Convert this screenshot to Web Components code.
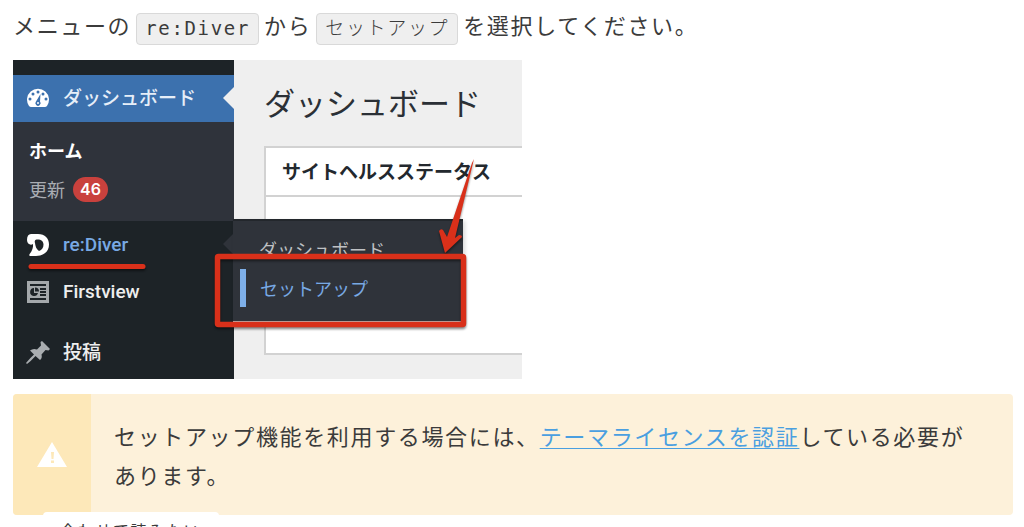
<!DOCTYPE html>
<html lang="ja">
<head>
<meta charset="utf-8">
<meta name="viewport" content="width=device-width, initial-scale=1">
<title>re:Diver セットアップ</title>
<style>
  body {
    margin: 0;
    background: #fff;
    color: #3b3b3b;
    font: 22px/39px "Noto Sans CJK JP", sans-serif;
    letter-spacing: 0.075em;
  }
</style>
</head>
<body>
<guide-page></guide-page>

<template id="t-page">
  <style>
    :host { display: block; padding: 5px 11px 0 13px; }
    p { margin: 0; }
    dashboard-shot { margin-top: 15px; }
    alert-note { margin-top: 15px; }
  </style>
  <p>メニューの<code-chip>re:Diver</code-chip>から<code-chip>セットアップ</code-chip>を選択してください。</p>
  <dashboard-shot></dashboard-shot>
  <alert-note>セットアップ機能を利用する場合には、<text-link href="#license">テーマライセンスを認証</text-link>している必要があります。</alert-note>
  <related-card>合わせて読みたい</related-card>
</template>

<template id="t-chip">
  <style>
    :host { display: inline-block; margin: 0 5px; vertical-align: top; }
    code {
      display: block; box-sizing: border-box; height: 32px; margin-top: 8px; padding: 0 8px;
      border: 1px solid #d9d9d9; border-radius: 4px; background: #efefef;
      font: 300 19px/28px "DejaVu Sans Mono", "Noto Sans CJK JP", monospace;
    }
  </style>
  <code><slot></slot></code>
</template>

<template id="t-link"><style>
    :host { display: inline; }
    a { color: #4a9fe0; text-decoration: underline; text-decoration-thickness: 1px; text-underline-offset: 3px; }
  </style><a><slot></slot></a></template>

<template id="t-alert">
  <style>
    :host { display: grid; grid-template-columns: 78px 1fr; border-radius: 4px; overflow: hidden; background: #fdf1da; }
    .mark { display: grid; place-items: center; background: #fde8b9; }
    .text { padding: 22px 36px 21px 23px; }
    svg { display: block; }
  </style>
  <div class="mark">
    <svg width="30" height="25" viewBox="0 0 30 25" aria-hidden="true">
      <path d="M15 0 30 25H0Z" fill="#fff"/>
      <path d="M14 10h3l-.5 7h-2zM14 18.500h3v2.500h-3z" fill="#fde8b9"/>
    </svg>
  </div>
  <div class="text"><slot></slot></div>
</template>

<template id="t-related">
  <style>
    :host { display: block; position: relative; margin-top: -3px; padding-left: 30px; }
    span { display: inline-block; padding: 6px 18px 0 17px; border-radius: 4px; background: #fff; font-size: 16px; line-height: 24px; vertical-align: top; }
  </style>
  <span><slot></slot></span>
</template>

<template id="t-menu-item">
  <style>
    :host { display: block; position: relative; }
    a {
      display: flex; align-items: center; gap: 12px; height: 47px; padding-left: 12px;
      color: inherit; text-decoration: none;
      font: 500 19px/24px Roboto, "Noto Sans CJK JP", sans-serif;
    }
    ::slotted(svg) { display: block; flex: none; }
    :host([active]) { background: #3c71ae; color: #e6eef8; }
    :host([open]) { color: #78a9e4; }
    :host([active])::after, :host([open])::after {
      content: ""; position: absolute; right: 0; top: 12px;
      border: 11px solid transparent; border-left: 0; border-right-color: #efefef;
    }
    :host([open])::after { border-right-color: #2f333a; }
  </style>
  <a href="#"><slot name="icon"></slot><slot></slot></a>
</template>

<template id="t-panel">
  <style>
    :host { display: block; border: 2px solid #d2d2d2; border-right: 0; background: #fff; }
    h2 { margin: 0; padding: 0 16px 1px; border-bottom: 2px solid #d2d2d2; color: #23282e; font-size: 19px; line-height: 46px; font-weight: 700; white-space: nowrap; }
    .body { height: 156px; }
  </style>
  <h2><slot></slot></h2>
  <div class="body"></div>
</template>

<template id="t-flyout">
  <style>
    :host { display: block; background: #2f333a; border-top: 2px solid #23272c; border-bottom: 2px solid #b8b8b8; box-sizing: border-box; box-shadow: 2px 2px 4px rgba(0,0,0,.15); }
    a { display: block; color: #bfc1c4; font-size: 18px; text-decoration: none; white-space: nowrap; }
    .first { height: 34px; padding-left: 26px; line-height: 56px; overflow: hidden; }
    .current { margin: 14px 0 0 7px; padding-left: 14px; border-left: 6px solid #7eafe8; color: #78a9e4; line-height: 38px; }
  </style>
  <a class="first" href="#">ダッシュボード</a>
  <a class="current" href="#">セットアップ</a>
</template>

<template id="t-shot">
  <style>
    :host {
      display: grid; grid-template-columns: 221px 1fr; position: relative; width: 509px; max-width: 100%;
      overflow: hidden; background: #efefef; font-family: "Noto Sans CJK JP", sans-serif; line-height: 24px; letter-spacing: normal;
    }
    nav { padding: 15px 0 3px; background: #1d2327; color: #eee; }
    .sub { display: grid; gap: 14px; padding: 16px 16px 19px; background: #2f333b; font-size: 18px; line-height: 25px; }
    .sub a { display: flex; align-items: center; gap: 8px; color: #a9adb3; text-decoration: none; }
    .sub a.home { color: #fff; font-weight: 700; }
    .badge { padding: 0 7px; border-radius: 13px; background: #c9413d; color: #fff; font: 600 16px/25px Inter, sans-serif; }
    .gap { height: 14px; }
    main { padding: 18px 0 24px 30px; }
    h1 { margin: 0; color: #2b3036; font-size: 31px; line-height: 48px; font-weight: 400; white-space: nowrap; }
    wp-panel { margin-top: 20px; }
    wp-flyout { position: absolute; left: 220px; top: 159px; width: 230px; height: 104px; }
    .marks { position: absolute; left: 0; top: 0; filter: drop-shadow(0 2px 1px rgba(0,0,0,.45)); }
  </style>
  <nav>
    <wp-item active>
      <svg slot="icon" width="26" height="24" viewBox="0 0 26 24" aria-hidden="true">
        <path d="M4 19A11 11 0 1 1 22 19Q21 20 20 20H6Q5 20 4 19Z" fill="#fff"/>
        <g fill="#3c71ae"><circle cx="13" cy="5" r="1.500"/><circle cx="8" cy="7" r="1.500"/><circle cx="18" cy="7" r="1.500"/><circle cx="5" cy="12" r="1.500"/><circle cx="21" cy="12" r="1.500"/><path d="M15.500 7 15 14.500A2.600 2.600 0 1 1 11 14.500Z"/></g>
        <circle cx="13" cy="16" r="1" fill="#fff"/>
      </svg>ダッシュボード</wp-item>
    <div class="sub">
      <a class="home" href="#">ホーム</a>
      <a href="#">更新 <span class="badge">46</span></a>
    </div>
    <wp-item open>
      <svg slot="icon" width="26" height="24" viewBox="0 0 26 24" aria-hidden="true">
        <path fill="#fff" fill-rule="evenodd" d="M6 1H13C20 1 24 5.500 24 11.500C24 19 18 23 11 23H5.500C4 23 4 21.500 5 20.500C7 18 8.500 14 8 11C6 12.500 2 11.500 2 7C2 3 3.500 1 6 1ZM11.500 6.500C9.500 7 9.500 8.500 10 10C10.500 13 11 16 14 18C17 17 18.500 14.500 18.500 11.500C18.500 8 15.500 6 11.500 6.500Z"/>
      </svg>re:Diver</wp-item>
    <wp-item>
      <svg slot="icon" width="26" height="24" viewBox="0 0 26 24" aria-hidden="true">
        <path d="M2 1h22v22H2z" fill="#a4a8ab"/>
        <path d="M5 4h16v2H5zM5 18h16v2H5zM15 8h6v2h-6zM15 11h6v2h-6zM15 14h6v2h-6z" fill="#1d2327"/>
        <path d="M9 8A4 4 0 1 0 13 13H9ZM10 7.500V11.500H14A4 4 0 0 0 10 7.500Z" fill="#1d2327"/>
      </svg>Firstview</wp-item>
    <div class="gap"></div>
    <wp-item>
      <svg slot="icon" width="26" height="24" viewBox="0 0 26 24" aria-hidden="true">
        <path d="M15.500 1 17 0 25 8 23.500 9.500 20.500 9 16.500 13.500Q17.500 17 15 19L10.500 15Q6 20 2 23L1 22Q5 17 9 13.500L5 9.500Q8 7 12 8.500L16 4.500Z" fill="#a9adb0"/>
      </svg>投稿</wp-item>
  </nav>
  <main>
    <h1>ダッシュボード</h1>
    <wp-panel>サイトヘルスステータス</wp-panel>
  </main>
  <wp-flyout></wp-flyout>
  <svg class="marks" width="509" height="319" viewBox="0 0 509 319" aria-hidden="true">
    <path d="M18 206.500H130" stroke="#d9301a" stroke-width="5" stroke-linecap="round"/>
    <rect x="204.500" y="196.500" width="246" height="68" rx="1" fill="none" stroke="#d9301a" stroke-width="5.500" stroke-linejoin="round"/>
    <path d="M461 99 442 178 446 175Q449 175 449 177L432 193 426 171Q428 168 430 170L434 177 459 103Z" fill="#d9301a"/>
  </svg>
</template>

<script>
  const define = (name, templateId, setup) => {
    customElements.define(name, class extends HTMLElement {
      constructor() {
        super();
        this.attachShadow({ mode: "open" })
          .append(document.getElementById(templateId).content.cloneNode(true));
      }
      connectedCallback() {
        if (setup) setup(this);
      }
    });
  };

  define("code-chip", "t-chip");
  define("text-link", "t-link", el => {
    el.shadowRoot.querySelector("a").href = el.getAttribute("href") || "#";
  });
  define("alert-note", "t-alert");
  define("related-card", "t-related");
  define("wp-item", "t-menu-item");
  define("wp-panel", "t-panel");
  define("wp-flyout", "t-flyout");
  define("dashboard-shot", "t-shot");
  define("guide-page", "t-page");
</script>
</body>
</html>
